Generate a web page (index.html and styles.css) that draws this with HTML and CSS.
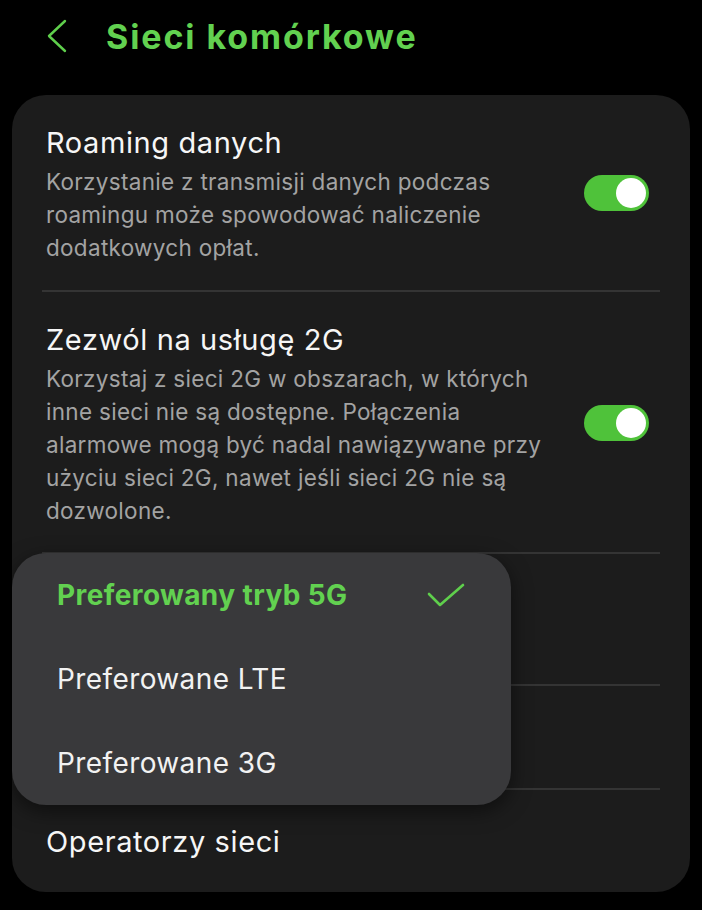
FILE: index.html
```html
<!DOCTYPE html>
<html lang="pl">
<head>
<meta charset="UTF-8" />
<title>Sieci komórkowe</title>
<link rel="stylesheet" href="styles.css">
</head>
<body>
  <div class="header">
    <svg class="back" width="22" height="34" viewBox="0 0 22 34">
      <path d="M19 2 L3 17 L19 32" fill="none" stroke="#5fcf4c" stroke-width="2.4" stroke-linecap="round" stroke-linejoin="round"/>
    </svg>
    <h1>Sieci komórkowe</h1>
  </div>

  <div class="card">
    <div class="row with-switch">
      <div class="row-text">
        <div class="row-title">Roaming danych</div>
        <div class="row-sub">Korzystanie z transmisji danych podczas roamingu może spowodować naliczenie dodatkowych opłat.</div>
      </div>
      <div class="switch on"><span class="knob"></span></div>
    </div>

    <div class="row with-switch second">
      <div class="row-text">
        <div class="row-title">Zezwól na usługę 2G</div>
        <div class="row-sub">Korzystaj z sieci 2G w obszarach, w których inne sieci nie są dostępne. Połączenia alarmowe mogą być nadal nawiązywane przy użyciu sieci 2G, nawet jeśli sieci 2G nie są dozwolone.</div>
      </div>
      <div class="switch on"><span class="knob"></span></div>
    </div>

    <!-- rows covered by the popup menu -->
    <div class="row tall"></div>
    <div class="row mid"></div>

    <div class="row last">
      <div class="row-text">
        <div class="row-title">Operatorzy sieci</div>
      </div>
    </div>

    <div class="menu">
      <div class="menu-item selected">
        <span>Preferowany tryb 5G</span>
        <svg class="check" width="38" height="24" viewBox="0 0 38 24">
          <path d="M2 11 L13 22 L36 2" fill="none" stroke="#5fcf4c" stroke-width="2.6" stroke-linecap="round" stroke-linejoin="round"/>
        </svg>
      </div>
      <div class="menu-item"><span>Preferowane LTE</span></div>
      <div class="menu-item"><span>Preferowane 3G</span></div>
    </div>
  </div>
</body>
</html>
```

FILE: styles.css
```css
body {
  margin: 0;
  background-color: #000;
  color: #f4f4f4;
  font-family: Inter, "Noto Sans", sans-serif;
  width: 702px;
  height: 910px;
  overflow: hidden;
}
.header {
  display: flex;
  align-items: center;
  height: 72px;
  padding-left: 46px;
}
.back {
  margin-right: 38px;
}
h1 {
  margin: 0;
  font-weight: 700;
  font-size: 34px;
  color: #62d150;
  letter-spacing: 1.9px;
}
.card {
  position: relative;
  margin: 23px 12px 0 12px;
  background-color: #1c1c1c;
  border-radius: 34px;
  padding: 0 30px;
}
.row {
  display: flex;
  align-items: center;
  padding: 30px 0 26px 4px;
  border-bottom: 2px solid #343434;
}
.row.second {
  padding-bottom: 25px;
}
.row.tall {
  height: 132px;
  box-sizing: border-box;
}
.row.mid {
  height: 104px;
  box-sizing: border-box;
}
.row.last {
  border-bottom: none;
  padding: 34px 0 32px 4px;
}
.row-text {
  flex: 1;
}
.row-title {
  font-size: 29px;
  line-height: 36px;
  letter-spacing: 0.6px;
  color: #f6f6f6;
}
.row-sub {
  margin-top: 4px;
  font-size: 22.5px;
  line-height: 33px;
  letter-spacing: 0.3px;
  color: #a3a3a3;
  max-width: 518px;
}
.switch {
  width: 65px;
  height: 36px;
  border-radius: 18px;
  background-color: #4fc23a;
  position: relative;
  margin-left: 8px;
  margin-right: 11px;
  margin-bottom: 4px;
  flex-shrink: 0;
}
.switch .knob {
  position: absolute;
  top: 3px;
  right: 3px;
  width: 30px;
  height: 30px;
  border-radius: 50%;
  background-color: #fff;
}
.menu {
  position: absolute;
  left: 0;
  top: 458px;
  width: 499px;
  height: 252px;
  background-color: #39393b;
  border-radius: 34px;
  box-shadow: 0 6px 20px rgba(0, 0, 0, 0.5);
  display: flex;
  flex-direction: column;
  justify-content: center;
}
.menu-item {
  display: flex;
  align-items: center;
  justify-content: space-between;
  height: 84px;
  padding: 0 46px 0 45px;
  font-size: 28px;
  letter-spacing: 0.4px;
  color: #f2f2f2;
}
.menu-item.selected {
  color: #62d150;
  font-weight: 700;
}
```
